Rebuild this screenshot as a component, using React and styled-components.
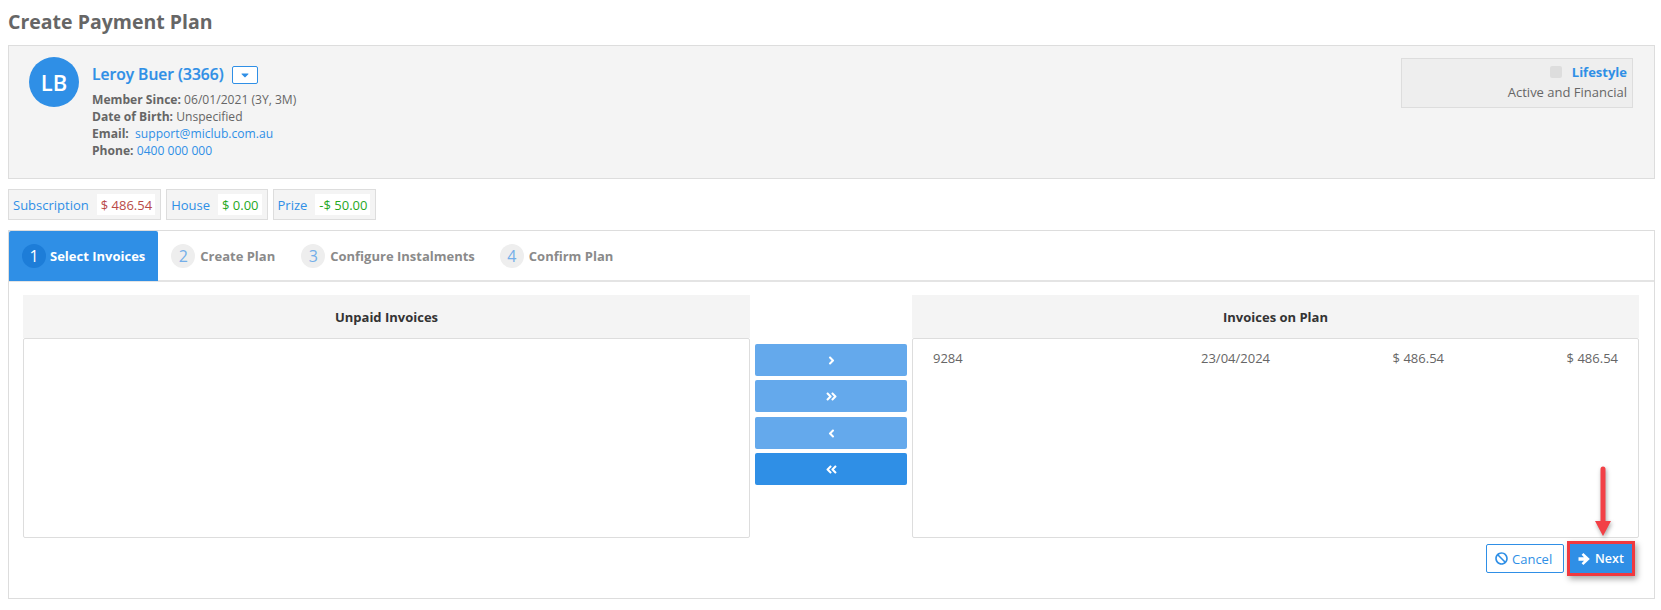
import React from "react";
import styled, { createGlobalStyle } from "styled-components";
import { FaAngleRight, FaAngleDoubleRight, FaAngleLeft, FaAngleDoubleLeft, FaCaretDown, FaBan } from "react-icons/fa";

const Global = createGlobalStyle`
  html, body { margin: 0; padding: 0; background: #fff; }
  body { font-family: "Open Sans", "Liberation Sans", sans-serif; font-size: 13px; color: #666; }
  * { box-sizing: border-box; }
`;

const Page = styled.div`
  position: relative;
  width: 1661px;
  height: 610px;
  padding: 0 6px 0 8px;
  overflow: hidden;
`;
const Title = styled.h1`
  margin: 0;
  height: 45px;
  padding-top: 9px;
  font-size: 19.5px;
  line-height: 25px;
  font-weight: 700;
  color: #666;
`;
const MemberPanel = styled.section`
  height: 134px;
  background: #f4f4f4;
  border: 1px solid #ddd;
  padding: 11px 21px 0 20px;
  display: flex;
  justify-content: space-between;
  align-items: flex-start;
`;
const MemberLeft = styled.div`
  display: flex;
  gap: 13px;
`;
const Avatar = styled.div`
  width: 50px;
  height: 50px;
  border-radius: 50%;
  background: #2f8fe6;
  color: #fff;
  font-size: 22px;
  font-weight: 600;
  display: flex;
  align-items: center;
  justify-content: center;
`;
const NameRow = styled.div`
  display: flex;
  align-items: center;
  gap: 8px;
  height: 34px;
`;
const Name = styled.a`
  font-size: 15.6px;
  font-weight: 600;
  color: #2f8fe6;
  -webkit-text-stroke: 0.2px #2f8fe6;
`;
const CaretButton = styled.button`
  width: 26px;
  height: 18px;
  padding: 0;
  margin-top: 2px;
  border: 1px solid #2f8fe6;
  border-radius: 2px;
  background: #fff;
  color: #2f8fe6;
  display: flex;
  align-items: center;
  justify-content: center;
  font-size: 12px;
`;
const InfoLine = styled.div`
  font-size: 12.1px;
  line-height: 17px;
  color: #666;
  white-space: pre;
  b { font-weight: 700; }
  a { color: #2f8fe6; }
`;
const StatusBox = styled.div`
  width: 232px;
  height: 50px;
  margin-top: 1px;
  background: #eee;
  border: 1px solid #ddd;
  padding: 3px 5px 0 0;
  text-align: right;
  font-size: 13px;
  line-height: 20px;
  color: #666;
`;
const StatusTop = styled.div`
  display: flex;
  justify-content: flex-end;
  align-items: center;
  gap: 10px;
`;
const StatusDot = styled.span`
  width: 12px;
  height: 12px;
  border-radius: 2px;
  background: #ddd;
`;
const StatusName = styled.b`
  color: #2f8fe6;
  font-weight: 700;
`;
const Balances = styled.div`
  display: flex;
  gap: 5px;
  margin-top: 10px;
`;
const Balance = styled.div`
  height: 31px;
  background: #f4f4f4;
  border: 1px solid #ddd;
  padding: 4px 5px 4px 4px;
  display: flex;
  align-items: stretch;
  gap: 8px;
  font-size: 13px;
  line-height: 23px;
`;
const BalanceLabel = styled.span`
  color: #2f8fe6;
`;
const BalanceValue = styled.span`
  background: #fff;
  padding: 0 3px 0 4px;
  color: ${p => p.$tone};
`;
const Wizard = styled.section`
  margin-top: 10px;
  height: 369px;
  border: 1px solid #ddd;
`;
const Tabs = styled.div`
  height: 51px;
  display: flex;
  border-bottom: 2px solid #e4e4e4;
`;
const Tab = styled.div`
  display: flex;
  align-items: center;
  height: 50px;
  gap: ${p => (p.$active ? 4 : 5)}px;
  margin-right: ${p => p.$gap}px;
  padding: 0 ${p => (p.$active ? 13 : 0)}px;
  background: ${p => (p.$active ? "#2f8fe6" : "transparent")};
  border-radius: 2px 2px 0 0;
  color: ${p => (p.$active ? "#fff" : "#8a8a8a")};
  font-size: 13px;
  font-weight: 700;
  white-space: nowrap;
`;
const StepNum = styled.span`
  width: 24px;
  height: 24px;
  border-radius: 50%;
  display: flex;
  align-items: center;
  justify-content: center;
  font-size: 16px;
  font-weight: 400;
  background: ${p => (p.$active ? "#1d7dd8" : "#eee")};
  color: ${p => (p.$active ? "#fff" : "#74aee9")};
`;
const Body = styled.div`
  padding: 13px 15px 0 14px;
  display: grid;
  grid-template-columns: 727px 162px 727px;
`;
const ListCol = styled.div`
  display: flex;
  flex-direction: column;
`;
const ListHead = styled.div`
  height: 43px;
  background: #f4f4f4;
  display: flex;
  align-items: center;
  justify-content: center;
  font-size: 13px;
  font-weight: 700;
  color: #333;
`;
const ListBox = styled.div`
  height: 200px;
  border: 1px solid #ddd;
  border-radius: 2px;
  padding: 10px 20px;
`;
const InvoiceRow = styled.div`
  display: grid;
  grid-template-columns: 1fr 177px 174px 174px;
  font-size: 13px;
  line-height: 18px;
  color: #666;
  span:not(:first-child) { text-align: right; }
`;
const Middle = styled.div`
  padding: 49px 5px 0;
  display: flex;
  flex-direction: column;
`;
const MoveButton = styled.button`
  height: 32px;
  margin-bottom: ${p => p.$mb}px;
  border: 0;
  padding: 0;
  border-radius: 2px;
  color: #fff;
  font-size: 13px;
  background: ${p => (p.$dim ? "#64a9ec" : "#2f8fe6")};
  display: flex;
  align-items: center;
  justify-content: center;
`;
const Actions = styled.div`
  display: flex;
  justify-content: flex-end;
  align-items: center;
  gap: 5px;
  padding: 6px 5px 0 0;
`;
const BaseButton = styled.button`
  height: 29px;
  font-family: inherit;
  font-size: 13px;
  display: flex;
  align-items: center;
  gap: 4px;
  svg { font-size: 13px; }
`;
const CancelButton = styled(BaseButton)`
  width: 78px;
  padding: 0 0 0 8px;
  border-radius: 2px;
  background: #fff;
  border: 1px solid #2f8fe6;
  color: #2f8fe6;
  font-weight: 400;
`;
const NextButton = styled(BaseButton)`
  width: 62px;
  padding: 0 0 0 8px;
  margin: 0 2px 0 1px;
  background: #2f8fe6;
  border: 0;
  color: #fff;
  font-size: 12.5px;
  font-weight: 600;
  outline: 3px solid #f0393f;
  box-shadow: 2px 3px 6px 3px rgba(0,0,0,.35);
`;
const ArrowNote = styled.svg`
  position: absolute;
  left: 1591px;
  top: 464px;
  filter: drop-shadow(1px 2px 2px rgba(0,0,0,.35));
`;

function ThickArrow() {
  return (
    <svg width="13" height="12" viewBox="0 0 13 12">
      <path d="M0.5 4.2 H6 L3.6 1.8 L5.4 0 L11.8 6 L5.4 12 L3.6 10.2 L6 7.8 H0.5 Z" fill="currentColor" />
    </svg>
  );
}

export default function App() {
  return (
    <Page>
      <Global />
      <Title>Create Payment Plan</Title>
      <MemberPanel>
        <MemberLeft>
          <Avatar>LB</Avatar>
          <div>
            <NameRow>
              <Name>Leroy Buer (3366)</Name>
              <CaretButton><FaCaretDown /></CaretButton>
            </NameRow>
            <InfoLine><b>Member Since:</b> 06/01/2021 (3Y, 3M)</InfoLine>
            <InfoLine><b>Date of Birth:</b> Unspecified</InfoLine>
            <InfoLine><b>Email:</b>  <a>support@miclub.com.au</a></InfoLine>
            <InfoLine><b>Phone:</b> <a>0400 000 000</a></InfoLine>
          </div>
        </MemberLeft>
        <StatusBox>
          <StatusTop><StatusDot /><StatusName>Lifestyle</StatusName></StatusTop>
          <div>Active and Financial</div>
        </StatusBox>
      </MemberPanel>
      <Balances>
        <Balance><BalanceLabel>Subscription</BalanceLabel><BalanceValue $tone="#b94a48">$ 486.54</BalanceValue></Balance>
        <Balance><BalanceLabel>House</BalanceLabel><BalanceValue $tone="#1fa81f">$ 0.00</BalanceValue></Balance>
        <Balance><BalanceLabel>Prize</BalanceLabel><BalanceValue $tone="#1fa81f">-$ 50.00</BalanceValue></Balance>
      </Balances>
      <Wizard>
        <Tabs>
          <Tab $active $gap={13}><StepNum $active>1</StepNum>Select Invoices</Tab>
          <Tab $gap={26}><StepNum>2</StepNum>Create Plan</Tab>
          <Tab $gap={25}><StepNum>3</StepNum>Configure Instalments</Tab>
          <Tab $gap={0}><StepNum>4</StepNum>Confirm Plan</Tab>
        </Tabs>
        <Body>
          <ListCol>
            <ListHead>Unpaid Invoices</ListHead>
            <ListBox />
          </ListCol>
          <Middle>
            <MoveButton $dim $mb={4}><FaAngleRight /></MoveButton>
            <MoveButton $dim $mb={5}><FaAngleDoubleRight /></MoveButton>
            <MoveButton $dim $mb={4}><FaAngleLeft /></MoveButton>
            <MoveButton $mb={0}><FaAngleDoubleLeft /></MoveButton>
          </Middle>
          <ListCol>
            <ListHead>Invoices on Plan</ListHead>
            <ListBox>
              <InvoiceRow>
                <span>9284</span><span>23/04/2024</span><span>$ 486.54</span><span>$ 486.54</span>
              </InvoiceRow>
            </ListBox>
            <Actions>
              <CancelButton><FaBan />Cancel</CancelButton>
              <NextButton><ThickArrow />Next</NextButton>
            </Actions>
          </ListCol>
        </Body>
      </Wizard>
      <ArrowNote width="24" height="76" viewBox="0 0 24 76">
        <path d="M12 5 V60" stroke="#f24046" strokeWidth="5" strokeLinecap="round" />
        <path d="M4 57 H20 L12 72 Z" fill="#f24046" />
      </ArrowNote>
    </Page>
  );
}
